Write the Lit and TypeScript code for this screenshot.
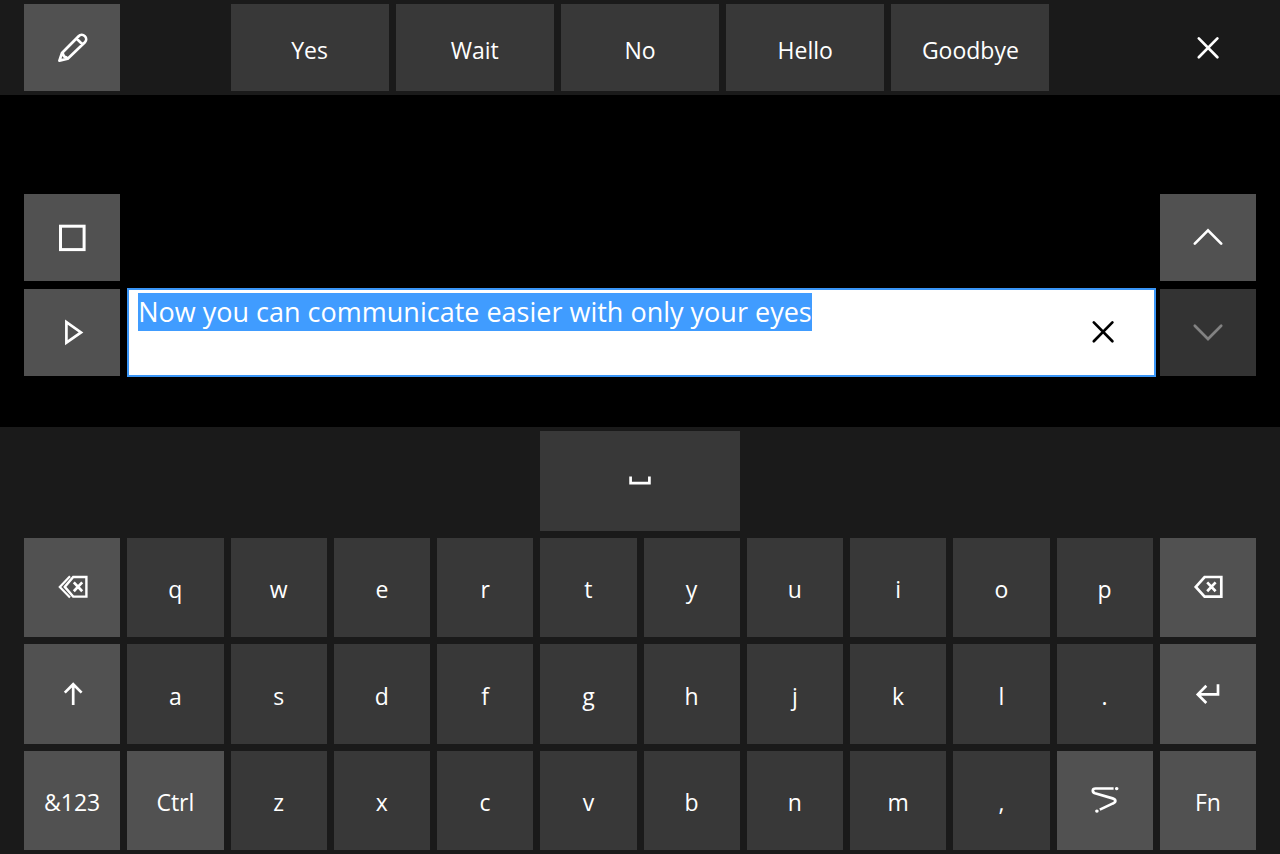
import { LitElement, html, css, svg } from "lit";
import { customElement, query, state } from "lit/decorators.js";
import { classMap } from "lit/directives/class-map.js";

const icons = {
  pencil: svg`<path stroke-linejoin="round" d="M3.4 28.6 6 21 22.6 4.2A4.2 4.2 0 0 1 28.9 10.3L11.7 26.8ZM6 21.2C8 21.5 7 25 9 24.8 10.5 24.6 11 26 11.5 27M20.5 6.5 26.7 12.6"/>`,
  close: svg`<path stroke-linecap="round" d="M6.8 6.4 25.4 25.2M25.4 6.4 6.8 25.2"/>`,
  stop: svg`<rect x="4.5" y="4.2" width="23.6" height="23.4" stroke-width="3"/>`,
  play: svg`<path d="M10.4 5.2V25.6L25 15.4Z"/>`,
  up: svg`<path stroke-linecap="round" d="M2.8 21.6 16 8.4 29.2 21.6"/>`,
  down: svg`<path stroke-linecap="round" d="M2.8 8.8 16 22 29.2 8.8"/>`,
  space: svg`<path d="M6.6 11.5V18.2H25.4V11.5"/>`,
  backspace: svg`<path d="M3.8 15.9 12.6 6H29.3V25.6H12.6ZM15.2 11.4 23.6 20.2M23.6 11.4 15.2 20.2"/>`,
  deleteWord: svg`<path stroke-width="2.2" d="M14 5.2 3.8 15.9 14 26.6"/><path stroke-width="2.4" d="M8.8 15.9 17.2 6H30.4V25.6H17.2Z"/><path d="M17.8 11.4 26.2 20.2M26.2 11.4 17.8 20.2"/>`,
  shift: svg`<path d="M17.2 27V6M8.8 14.6 17.2 6.2 25.6 14.6"/>`,
  enter: svg`<path d="M26 6.3V16.4H5.8M14.3 7.8 5.8 16.4 14.3 25"/>`,
  swipe: svg`<path d="M24.6 4.5H6.5C3 4.5 3 8.2 6 9.2L23.6 14.4C27.2 15.6 27.2 18 24 19.4L10.8 25.6"/><path stroke-width="3.4" stroke-linecap="round" d="M27.6 4.6h.2M7.8 27.1h.2"/>`,
};

type IconName = keyof typeof icons;

interface Key {
  label: string;
  icon?: IconName;
  light?: boolean;
}

const letters = (row: string): Key[] => [...row].map((label) => ({ label }));

const keys: Key[] = [
  { label: "Delete word", icon: "deleteWord", light: true },
  ...letters("qwertyuiop"),
  { label: "Backspace", icon: "backspace", light: true },
  { label: "Shift", icon: "shift", light: true },
  ...letters("asdfghjkl."),
  { label: "Enter", icon: "enter", light: true },
  { label: "&123", light: true },
  { label: "Ctrl", light: true },
  ...letters("zxcvbnm,"),
  { label: "Shape writing", icon: "swipe", light: true },
  { label: "Fn", light: true },
];

const phrases = ["Yes", "Wait", "No", "Hello", "Goodbye"];

@customElement("app-root")
export class AppRoot extends LitElement {
  static styles = css`
    :host {
      display: flex;
      flex-direction: column;
      min-height: 100vh;
      background: #000;
      color: #fff;
      font-family: "Open Sans", "Noto Sans", sans-serif;
      font-size: 23px;
    }
    .row {
      display: grid;
      grid-template-columns: repeat(12, minmax(0, 1fr));
      column-gap: 7px;
      padding: 4px 24px;
    }
    .bar {
      background: #1a1a1a;
      grid-template-rows: 87px;
    }
    .phrases {
      grid-column: 3 / 11;
      display: grid;
      grid-template-columns: repeat(5, minmax(0, 1fr));
      gap: 7px;
    }
    .compose {
      grid-template-rows: 87px 87px;
      row-gap: 8px;
      padding-top: 99px;
      padding-bottom: 51px;
    }
    .keyboard {
      flex: 1;
      background: #1a1a1a;
      grid-template-rows: repeat(4, minmax(64px, 1fr));
      row-gap: 7px;
    }
    button {
      display: flex;
      align-items: center;
      justify-content: center;
      min-width: 0;
      margin: 0;
      padding: 0;
      border: 0;
      background: #383838;
      color: inherit;
      font: inherit;
      line-height: 32px;
    }
    .text {
      padding-top: 4px;
    }
    .light {
      background: #515151;
    }
    .plain {
      background: transparent;
    }
    .clear {
      padding-bottom: 2px;
    }
    .last {
      grid-column: 12;
    }
    .space {
      grid-column: 6 / 8;
    }
    .space ~ .first {
      grid-column: 1;
    }
    button:disabled {
      background: #333;
      color: #828282;
    }
    svg {
      display: block;
      width: 32px;
      height: 32px;
      fill: none;
      stroke: currentColor;
      stroke-width: 2.7;
    }
    .box {
      grid-column: 2 / 12;
      display: grid;
      grid-template-columns: minmax(0, 1fr) 96px;
      margin: -1px -3px -1px 0;
      padding-right: 3px;
      border: 2px solid #3a96f7;
      background: #fff;
      color: #000;
    }
    textarea {
      box-sizing: border-box;
      width: 100%;
      height: 100%;
      margin: 0;
      padding: 3px 9px;
      border: 0;
      outline: 0;
      resize: none;
      overflow: hidden;
      background: transparent;
      color: #000;
      font: inherit;
      font-size: 27px;
      line-height: 38px;
    }
    textarea::selection {
      background: #409cff;
      color: #fff;
    }
  `;

  @state() private message = "Now you can communicate easier with only your eyes";
  @query("textarea") private field!: HTMLTextAreaElement;

  firstUpdated() {
    this.field.focus();
    this.field.select();
  }

  private icon(name: IconName) {
    return html`<svg viewBox="0 0 32 32" aria-hidden="true">${icons[name]}</svg>`;
  }

  private key(key: Key, index: number) {
    const classes = { light: !!key.light, text: !key.icon, first: index % 12 === 0 };
    return html`<button class=${classMap(classes)} aria-label=${key.label}>${key.icon ? this.icon(key.icon) : key.label}</button>`;
  }

  render() {
    return html`
      <header class="row bar">
        <button class="light" aria-label="Edit phrases">${this.icon("pencil")}</button>
        <div class="phrases">${phrases.map((p) => html`<button class="text">${p}</button>`)}</div>
        <button class="plain last" aria-label="Close">${this.icon("close")}</button>
      </header>
      <section class="row compose">
        <button class="light" aria-label="Stop">${this.icon("stop")}</button>
        <button class="light last" aria-label="Scroll up">${this.icon("up")}</button>
        <button class="light" aria-label="Play">${this.icon("play")}</button>
        <div class="box">
          <textarea
            aria-label="Message"
            spellcheck="false"
            .value=${this.message}
            @input=${() => (this.message = this.field.value)}
          ></textarea>
          <button class="plain clear" aria-label="Clear" @click=${() => (this.message = "")}>${this.icon("close")}</button>
        </div>
        <button disabled aria-label="Scroll down">${this.icon("down")}</button>
      </section>
      <main class="row keyboard">
        <button class="space" aria-label="Space">${this.icon("space")}</button>
        ${keys.map((k, i) => this.key(k, i))}
      </main>
    `;
  }
}
